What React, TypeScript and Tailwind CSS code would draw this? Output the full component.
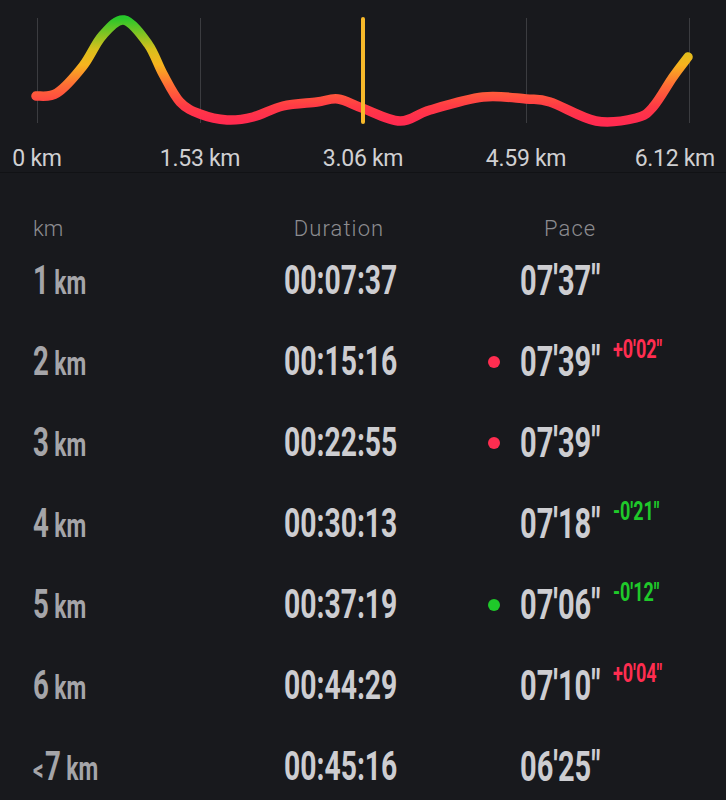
import React from 'react'

type Split = {
  km: string
  prefix?: string
  duration: string
  pace: string
  dot?: 'red' | 'green'
  diff?: string
  diffColor?: 'red' | 'green'
}

const splits: Split[] = [
  { km: '1', duration: '00:07:37', pace: `07'37"` },
  { km: '2', duration: '00:15:16', pace: `07'39"`, dot: 'red', diff: `+0'02"`, diffColor: 'red' },
  { km: '3', duration: '00:22:55', pace: `07'39"`, dot: 'red' },
  { km: '4', duration: '00:30:13', pace: `07'18"`, diff: `-0'21"`, diffColor: 'green' },
  { km: '5', duration: '00:37:19', pace: `07'06"`, dot: 'green', diff: `-0'12"`, diffColor: 'green' },
  { km: '6', duration: '00:44:29', pace: `07'10"`, diff: `+0'04"`, diffColor: 'red' },
  { km: '7', prefix: '<', duration: '00:45:16', pace: `06'25"` },
]

const points: [number, number][] = [
  [36, 96], [57, 93], [83, 66], [102, 36], [124, 20], [148, 44], [163, 74], [180, 102],
  [200, 114], [227, 120], [253, 117], [283, 106], [317, 102], [338, 99], [362, 108],
  [400, 121], [430, 110], [483, 97], [526, 99], [550, 102], [596, 121], [636, 118],
  [653, 107], [673, 77], [688, 57],
]

// catmull-rom -> cubic bezier
const smoothPath = (pts: [number, number][]) => {
  let d = `M ${pts[0][0]} ${pts[0][1]}`
  for (let i = 0; i < pts.length - 1; i++) {
    const p0 = pts[i - 1] ?? pts[i]
    const p1 = pts[i]
    const p2 = pts[i + 1]
    const p3 = pts[i + 2] ?? p2
    const c1x = p1[0] + (p2[0] - p0[0]) / 6
    const c1y = p1[1] + (p2[1] - p0[1]) / 6
    const c2x = p2[0] - (p3[0] - p1[0]) / 6
    const c2y = p2[1] - (p3[1] - p1[1]) / 6
    d += ` C ${c1x} ${c1y}, ${c2x} ${c2y}, ${p2[0]} ${p2[1]}`
  }
  return d
}

const gridX = [37, 200, 363, 526, 689]

const PaceChart = () => (
  <div className="h-[173px] border-b border-[#111215]">
    <svg width="726" height="172" viewBox="0 0 726 172">
      <defs>
        <linearGradient id="paceGrad" gradientUnits="userSpaceOnUse" x1="0" y1="18" x2="0" y2="122">
          <stop offset="0" stopColor="#27c72a" />
          <stop offset="0.3" stopColor="#d8c01c" />
          <stop offset="0.45" stopColor="#f7b41e" />
          <stop offset="0.65" stopColor="#ff6b36" />
          <stop offset="0.85" stopColor="#ff3a45" />
          <stop offset="1" stopColor="#ff2a4f" />
        </linearGradient>
      </defs>
      {gridX.map(x => (
        <line key={x} x1={x + 0.5} x2={x + 0.5} y1="18" y2="123" stroke="#3b3c40" strokeWidth="1" />
      ))}
      <path d={smoothPath(points)} fill="none" stroke="url(#paceGrad)" strokeWidth="9.5" strokeLinecap="round" strokeLinejoin="round" />
      <line x1="363" x2="363" y1="19" y2="122" stroke="#f7b92a" strokeWidth="4" strokeLinecap="round" />
      <g fill="#d0d0d2" fontFamily="Roboto, sans-serif" fontSize="23" letterSpacing="-0.3">
        <text x="37" y="165.5" textAnchor="middle">0 km</text>
        <text x="200" y="165.5" textAnchor="middle">1.53 km</text>
        <text x="363" y="165.5" textAnchor="middle">3.06 km</text>
        <text x="526" y="165.5" textAnchor="middle">4.59 km</text>
        <text x="715" y="165.5" textAnchor="end">6.12 km</text>
      </g>
    </svg>
  </div>
)

const Cond = ({ className, children }: { className: string; children: React.ReactNode }) => (
  <span className={`inline-block origin-left scale-x-[0.69] whitespace-nowrap font-bold leading-none ${className}`}>
    {children}
  </span>
)

const SplitRow = ({ split }: { split: Split }) => (
  <div className="grid h-[81px] grid-cols-[251px_204px_32px_93px_1fr] items-center pl-[33px]">
    <div className="flex items-baseline whitespace-nowrap text-[#a5a5a9]">
      <Cond className="text-[40px]">
        {split.prefix && <span className="mr-[2px] text-[30px]">{split.prefix}</span>}
        {split.km}
        <span className="ml-[8px] text-[33px]">km</span>
      </Cond>
    </div>
    <div>
      <Cond className="text-[41px] text-[#cdcdd1]">{split.duration}</Cond>
    </div>
    <div className="flex items-center">
      {split.dot && (
        <span className={`h-3 w-3 rounded-full ${split.dot === 'red' ? 'bg-[#ff2d50]' : 'bg-[#1fc92a]'}`} />
      )}
    </div>
    <div>
      <Cond className="text-[42px] text-[#cdcdd1]">{split.pace}</Cond>
    </div>
    <div className="-mt-[22px]">
      {split.diff && (
        <Cond className={`text-[26px] ${split.diffColor === 'red' ? 'text-[#ff2d50]' : 'text-[#1fc92a]'}`}>
          {split.diff}
        </Cond>
      )}
    </div>
  </div>
)

const App = () => {
  return (
    <div className="h-[800px] w-[726px] overflow-hidden bg-[#18191d] font-['Roboto',sans-serif]">
      <PaceChart />
      <div className="grid h-[67px] grid-cols-[251px_204px_1fr] items-end pb-0 pl-[33px] text-[22px] font-light text-[#8c8c90]">
        <p className="leading-none">km</p>
        <p className="w-[110px] text-center leading-none tracking-[0.05em]">Duration</p>
        <p className="pl-[56px] leading-none tracking-[0.05em]">Pace</p>
      </div>
      {splits.map(split => (
        <SplitRow key={split.km} split={split} />
      ))}
    </div>
  )
}

export default App
